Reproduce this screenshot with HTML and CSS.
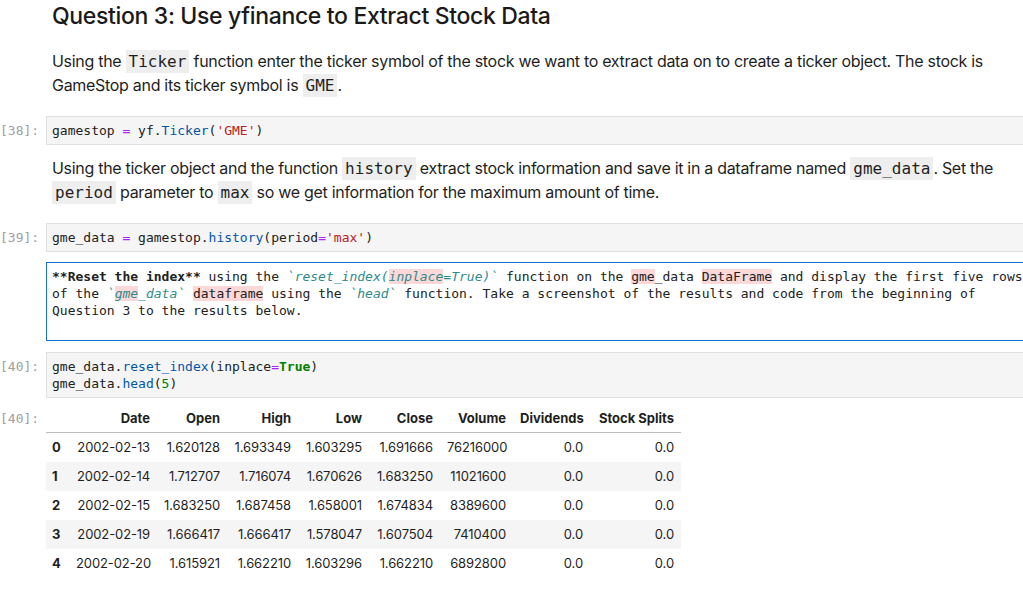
FILE: index.html
```html
<!DOCTYPE html>
<html>
<head>
<meta charset="utf-8">
<link rel="stylesheet" href="styles.css">
</head>
<body>
<div class="notebook">
  <div class="cell md first">
    <div class="prompt"></div>
    <div class="md-body">
      <h2 class="title">Question 3: Use yfinance to Extract Stock Data</h2>
      <p class="para">Using the <code>Ticker</code> function enter the ticker symbol of the stock we want to extract data on to create a ticker object. The stock is<br>GameStop and its ticker symbol is <code>GME</code>.</p>
    </div>
  </div>

  <div class="cell code c38">
    <div class="prompt">[38]:</div>
    <div class="code-body">gamestop <span class="op">=</span> yf.<span class="fn">Ticker</span>(<span class="str">'GME'</span>)</div>
  </div>

  <div class="cell md m2">
    <div class="prompt"></div>
    <div class="md-body">
      <p class="para">Using the ticker object and the function <code>history</code> extract stock information and save it in a dataframe named <code>gme_data</code>. Set the<br><code>period</code> parameter to <code>max</code> so we get information for the maximum amount of time.</p>
    </div>
  </div>

  <div class="cell code c39">
    <div class="prompt">[39]:</div>
    <div class="code-body">gme_data <span class="op">=</span> gamestop.<span class="fn">history</span>(period<span class="op">=</span><span class="str">'max'</span>)</div>
  </div>

  <div class="cell edit">
    <div class="prompt"></div>
    <div class="editor"><span class="b">**Reset the index**</span> using the <span class="tick">`reset_index(<span class="sp">inplace</span>=True)`</span> function on the <span class="sp">gme</span>_data <span class="sp">DataFrame</span> and display the first five rows
of the <span class="tick">`<span class="sp">gme</span>_data`</span> <span class="sp">dataframe</span> using the <span class="tick">`head`</span> function. Take a screenshot of the results and code from the beginning of
Question 3 to the results below.
</div>
  </div>

  <div class="cell code c40">
    <div class="prompt">[40]:</div>
    <div class="code-body">gme_data.<span class="fn">reset_index</span>(inplace<span class="op">=</span><span class="kw">True</span>)
gme_data.<span class="fn">head</span>(<span class="num">5</span>)</div>
  </div>

  <div class="cell output">
    <div class="prompt">[40]:</div>
    <div class="out-body">
      <table class="df">
        <colgroup>
          <col class="w-idx"><col class="w-date"><col class="w-70"><col class="w-71"><col class="w-71"><col class="w-71"><col class="w-73"><col class="w-77"><col class="w-91">
        </colgroup>
        <thead>
          <tr><th></th><th>Date</th><th>Open</th><th>High</th><th>Low</th><th>Close</th><th>Volume</th><th>Dividends</th><th>Stock Splits</th></tr>
        </thead>
        <tbody>
          <tr><th>0</th><td>2002-02-13</td><td>1.620128</td><td>1.693349</td><td>1.603295</td><td>1.691666</td><td>76216000</td><td>0.0</td><td>0.0</td></tr>
          <tr><th>1</th><td>2002-02-14</td><td>1.712707</td><td>1.716074</td><td>1.670626</td><td>1.683250</td><td>11021600</td><td>0.0</td><td>0.0</td></tr>
          <tr><th>2</th><td>2002-02-15</td><td>1.683250</td><td>1.687458</td><td>1.658001</td><td>1.674834</td><td>8389600</td><td>0.0</td><td>0.0</td></tr>
          <tr><th>3</th><td>2002-02-19</td><td>1.666417</td><td>1.666417</td><td>1.578047</td><td>1.607504</td><td>7410400</td><td>0.0</td><td>0.0</td></tr>
          <tr><th>4</th><td>2002-02-20</td><td>1.615921</td><td>1.662210</td><td>1.603296</td><td>1.662210</td><td>6892800</td><td>0.0</td><td>0.0</td></tr>
        </tbody>
      </table>
    </div>
  </div>
</div>
</body>
</html>
```

FILE: styles.css
```css
html, body {
  margin: 0;
  padding: 0;
  overflow: hidden;
  background: #ffffff;
}

body {
  font-family: Inter, "Noto Sans", sans-serif;
  color: #1f1f1f;
}

.notebook {
  width: 1070px;
}

.cell {
  display: flex;
  align-items: flex-start;
}

.prompt {
  width: 46px;
  flex: 0 0 46px;
  box-sizing: border-box;
  padding-right: 8px;
  text-align: right;
  font-family: "DejaVu Sans Mono", monospace;
  font-size: 13px;
  line-height: 17px;
  color: #a0a0a0;
}

/* markdown */
.md-body {
  flex: 1;
  padding-left: 6px;
}

.title {
  margin: 0;
  font-size: 23px;
  line-height: 32px;
  font-weight: 500;
  color: #1a1a1a;
  letter-spacing: -0.34px;
}

.para {
  margin: 17px 0 0;
  font-size: 16px;
  line-height: 24px;
  letter-spacing: -0.3px;
  color: #1f1f1f;
}

.m2 .para {
  margin-top: 0;
}

.para code {
  font-family: "DejaVu Sans Mono", monospace;
  font-size: 16px;
  line-height: 16px;
  letter-spacing: 0;
  background: #eeeeee;
  padding: 2px 3px;
  color: #1f1f1f;
}

/* cells spacing */
.c38 { margin-top: 19px; }
.m2 { margin-top: 11px; }
.c39 { margin-top: 19px; }
.edit { margin-top: 10px; }
.c40 { margin-top: 11px; }
.output { margin-top: 7px; }

.code .prompt {
  padding-top: 6px;
}

.code-body {
  flex: 1;
  background: #f5f5f5;
  border: 1px solid #e0e0e0;
  padding: 5px 5px;
  font-family: "DejaVu Sans Mono", monospace;
  font-size: 13px;
  line-height: 17px;
  white-space: pre;
  color: #212121;
}

.op { color: #aa22ff; }
.fn { color: #0055aa; }
.str { color: #ba2121; }
.kw { color: #008000; font-weight: bold; }
.num { color: #008000; }

/* markdown editor */
.editor {
  flex: 1;
  border: 1px solid #1a73d0;
  padding: 5px 5px 4px;
  font-family: "DejaVu Sans Mono", monospace;
  font-size: 13px;
  line-height: 17px;
  white-space: pre;
  color: #212121;
  min-height: 68px;
}

.editor .b { font-weight: bold; }
.editor .tick { color: #2e8b8b; font-style: italic; }
.editor .sp { background: #fcd8d8; }

/* output table */
.output .prompt {
  padding-top: 5px;
}

.out-body {
  flex: 1;
}

.df {
  border-collapse: collapse;
  font-family: Inter, "Noto Sans", sans-serif;
  font-size: 13px;
  color: #1f1f1f;
  table-layout: fixed;
  width: 635px;
}

.w-idx { width: 23px; }
.w-date { width: 88px; }
.w-70 { width: 70px; }
.w-71 { width: 71px; }
.w-73 { width: 73px; }
.w-77 { width: 77px; }
.w-91 { width: 91px; }

.df th, .df td {
  text-align: right;
  padding: 6px 7px;
  line-height: 17px;
  white-space: nowrap;
  overflow: visible;
  letter-spacing: -0.1px;
}

.df thead th {
  font-weight: 700;
  padding: 4px 7px 5px;
  line-height: 18px;
  letter-spacing: 0;
  border-bottom: 1px solid #bdbdbd;
}

.df tbody th {
  font-weight: 700;
  text-align: left;
  padding-left: 6px;
}

.df tbody tr:nth-child(even) {
  background: #f5f5f5;
}
```
